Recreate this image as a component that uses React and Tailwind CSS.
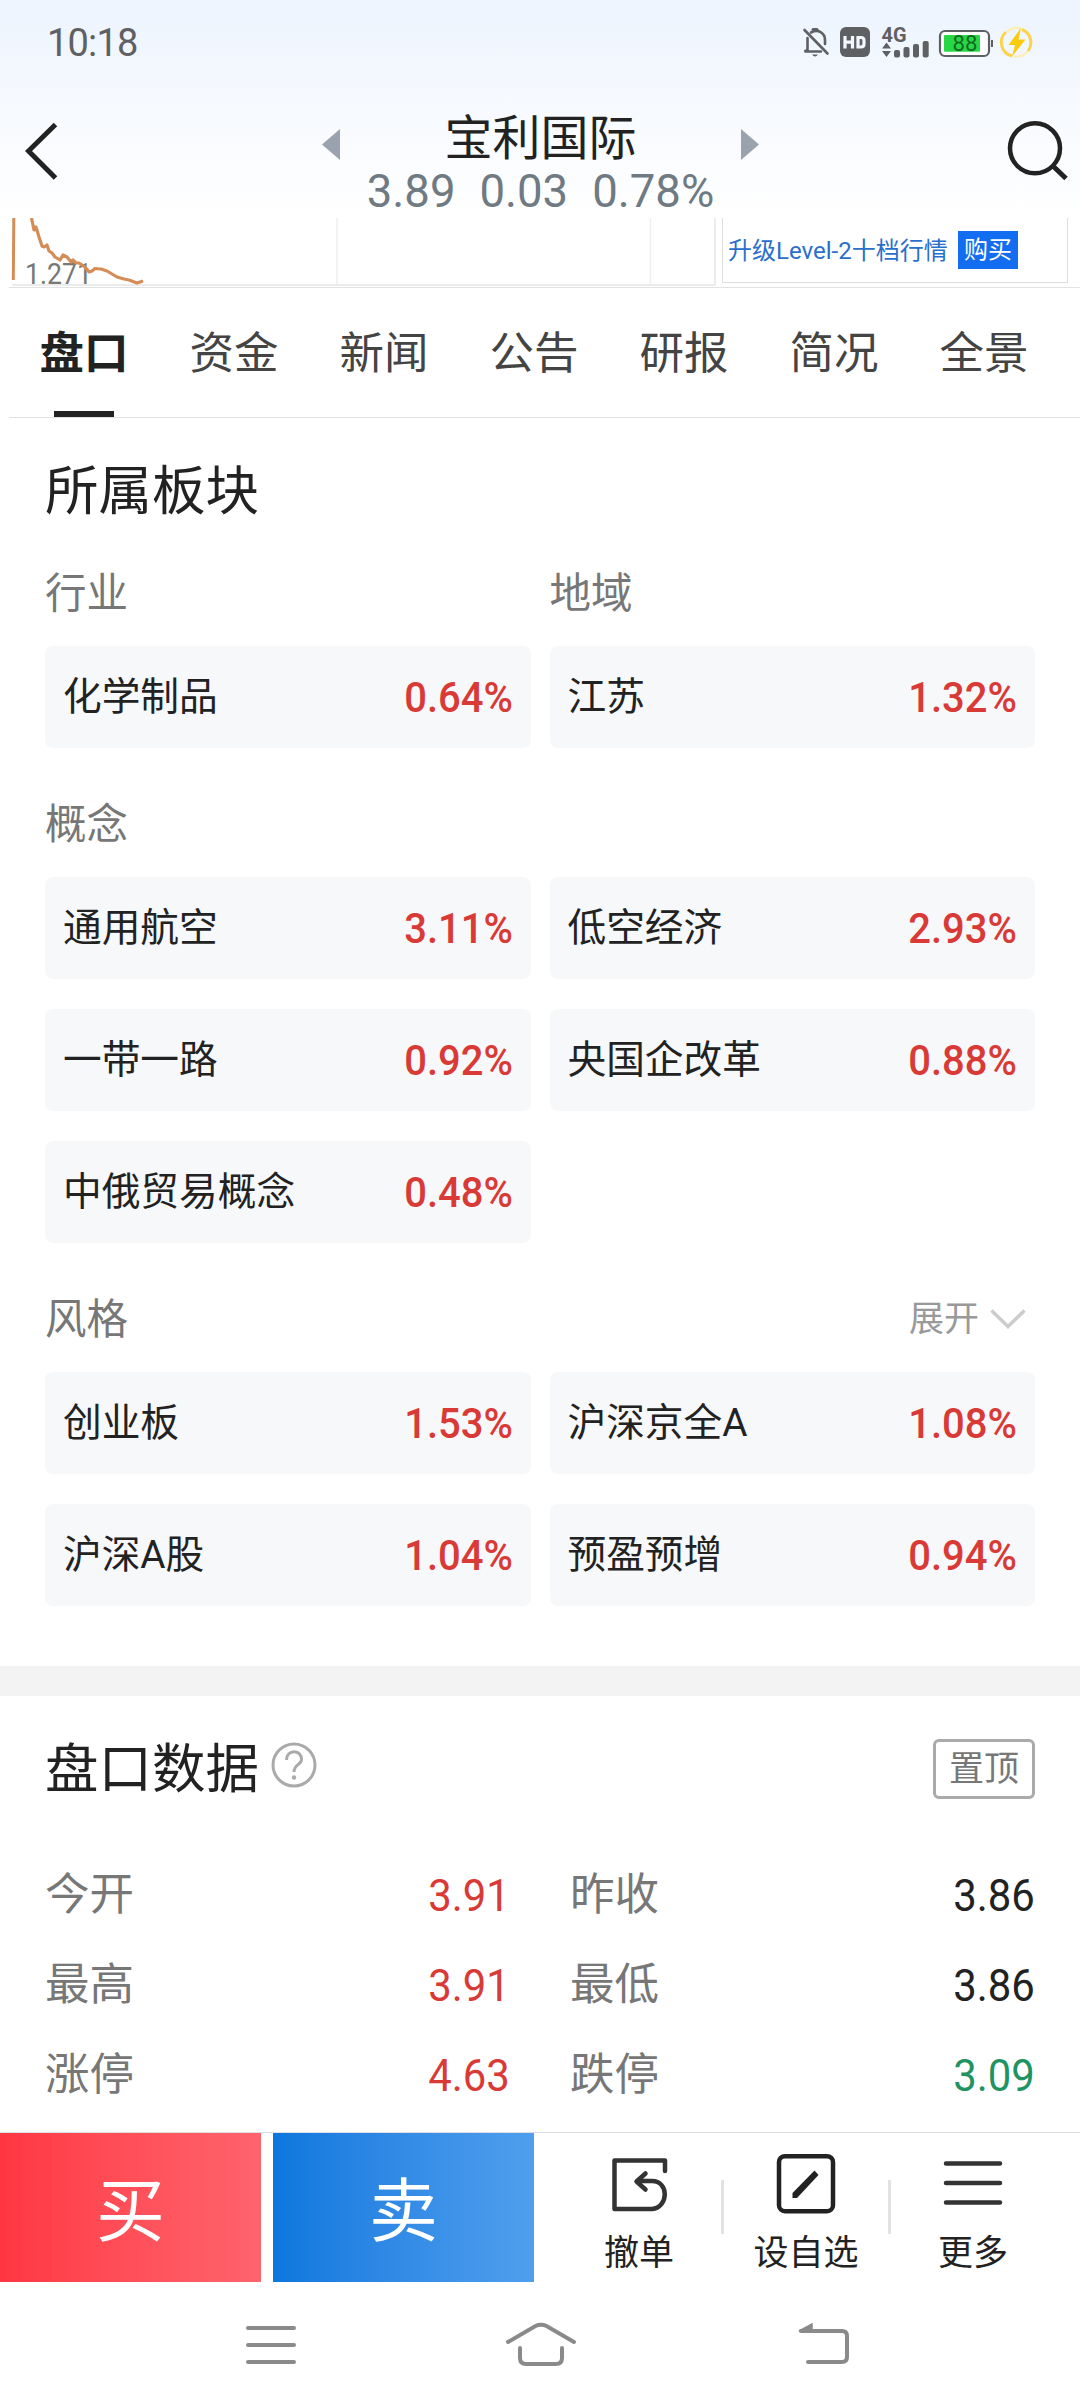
const TABS = ["盘口", "资金", "新闻", "公告", "研报", "简况", "全景"];

const CONCEPTS = [
  { name: "通用航空", change: "3.11%" },
  { name: "低空经济", change: "2.93%" },
  { name: "一带一路", change: "0.92%" },
  { name: "央国企改革", change: "0.88%" },
  { name: "中俄贸易概念", change: "0.48%" },
];

const STYLES = [
  { name: "创业板", change: "1.53%" },
  { name: "沪深京全A", change: "1.08%" },
  { name: "沪深A股", change: "1.04%" },
  { name: "预盈预增", change: "0.94%" },
];

const QUOTES = [
  { label: "今开", value: "3.91", color: "text-[#d93a36]" },
  { label: "昨收", value: "3.86", color: "text-[#222]" },
  { label: "最高", value: "3.91", color: "text-[#d93a36]" },
  { label: "最低", value: "3.86", color: "text-[#222]" },
  { label: "涨停", value: "4.63", color: "text-[#d93a36]" },
  { label: "跌停", value: "3.09", color: "text-[#1f9362]" },
];

function StatusBar() {
  return (
    <div className="flex h-[84px] items-center justify-between pl-[47px] pr-[47px] text-[#5f6064]">
      <span className="pt-[2px] text-[38px] leading-none tracking-[-0.8px]">10:18</span>
      <svg width="232" height="52" viewBox="801 16 232 52" fill="none">
        {/* muted bell */}
        <g stroke="#5f6064" strokeWidth="2.6" strokeLinecap="round">
          <path d="M804.5 30 L827.5 53.5" />
          <path d="M807.5 38 V50 L804.5 51.5 H821" />
          <path d="M811 32.5 C818 28.5 825 33 825 40 V44" />
          <path d="M813 29.5 h4" strokeWidth="3" />
        </g>
        <path d="M812 54.5 h6 q-3 4 -6 0z" fill="#5f6064" />
        {/* HD */}
        <rect x="840" y="27" width="30" height="30" rx="6" fill="#5f6064" />
        <path
          d="M845 36 V48.5 M852.5 36 V48.5 M845 42.2 H852.5 M858 37.5 H861 Q864 37.5 864 40.5 V44 Q864 47 861 47 H858 Z"
          stroke="#f3f7fe"
          strokeWidth="3.2"
        />
        {/* network */}
        <text x="881.5" y="42" fontSize="20" fontWeight="700" fill="#5f6064" textLength="25" lengthAdjust="spacingAndGlyphs">
          4G
        </text>
        <path d="M882 48.5 L886.5 42.5 L891 48.5 Z M882 51 L886.5 57 L891 51 Z" fill="#5f6064" />
        <g fill="#5f6064">
          <rect x="894" y="50" width="6" height="7.5" rx="2" />
          <rect x="903.5" y="47" width="6" height="10.5" rx="2" />
          <rect x="913" y="44" width="6" height="13.5" rx="2" />
          <rect x="922.7" y="41" width="6" height="16.5" rx="2" />
        </g>
        {/* battery */}
        <rect x="940" y="31" width="49" height="25" rx="5" stroke="#5f6064" strokeWidth="2.2" fill="#fff" />
        <rect x="944" y="35" width="36" height="16.8" rx="1" fill="#28d745" />
        <path d="M992 40 v7" stroke="#5f6064" strokeWidth="2" />
        <text x="952.5" y="51" fontSize="22" fill="#106b22" textLength="25" lengthAdjust="spacingAndGlyphs">
          88
        </text>
        {/* fast charge */}
        <path d="M1012 56 A14 14 0 0 1 1006 32 " stroke="#fbd44c" strokeWidth="3" />
        <path d="M1007 32 A14 14 0 0 1 1022 29 " stroke="#fdeeb8" strokeWidth="2.5" />
        <path d="M1022 29.5 A14 14 0 0 1 1028 51" stroke="#fbd44c" strokeWidth="3" />
        <path d="M1028 51 A14 14 0 0 1 1013 56" stroke="#fdeeb8" strokeWidth="2.5" />
        <path d="M1021 28 L1008.5 45 H1015 L1012 56.5 L1025.5 39.5 H1018.5 Z" fill="#fccb0b" />
      </svg>
    </div>
  );
}

function Header() {
  return (
    <header className="flex h-[134px] justify-between pl-[25px] pr-[11px]">
      <svg className="mr-[15px] mt-[38px]" width="34" height="58" viewBox="0 0 34 58" fill="none">
        <path d="M30.5 2.5 L3.5 29 L30.5 56" stroke="#222" strokeWidth="5" />
      </svg>
      <div className="flex flex-col items-center">
        <div className="flex h-[83px] w-[438px] items-center justify-between pt-[27px]">
          <svg className="mt-[10px]" width="18" height="31" viewBox="0 0 18 31">
            <path d="M18 0 V31 L0 15.5 Z" fill="#9aa3ad" />
          </svg>
          <h1 className="text-[48px] leading-[56px] text-[#222]">宝利国际</h1>
          <svg className="mt-[10px]" width="18" height="31" viewBox="0 0 18 31">
            <path d="M0 0 V31 L18 15.5 Z" fill="#9aa3ad" />
          </svg>
        </div>
        <div className="flex gap-[24px] text-[45.5px] leading-[49px] text-[#6f7a83]">
          <span>3.89</span>
          <span>0.03</span>
          <span>0.78%</span>
        </div>
      </div>
      <svg className="mt-[36px]" width="62" height="62" viewBox="0 0 62 62" fill="none" stroke="#222">
        <ellipse cx="28" cy="28.3" rx="25" ry="25" strokeWidth="4.5" />
        <path d="M46 46 L59 58.5" strokeWidth="5" />
      </svg>
    </header>
  );
}

// bottom edge of the scrolled price chart, with the Level-2 banner next to it
function ChartStrip() {
  return (
    <div className="ml-[9px] flex h-[70px] border-b border-[#e2e2e2]">
      <div className="h-[68px] w-[708px]">
        <svg width="708" height="68" viewBox="9 218 708 68" fill="none">
          <path d="M337 218 V285 M650.5 218 V285" stroke="#efefef" strokeWidth="1.5" />
          <path d="M715 218 V285 M12 285 H716" stroke="#ececec" strokeWidth="2" />
          <text x="25" y="284" fontSize="29" fill="#777" textLength="67" lengthAdjust="spacingAndGlyphs">
            1.271
          </text>
          <path d="M13.8 218 L13.3 280" stroke="#d58d58" strokeWidth="3" />
          <path
            d="M31.5 218 L34 230 L36 227 L39 237 L42 246 L44 247 L47 245 L49 251 L52 253 L55 257 L60 260 L63 255 L67 257 L71 262 L73 260 L76 263 L79 263 L85 267 L89 272 L92 271 L95 268.5 L101 269 L107 271 L112 274 L117 277 L124 279 L129 280 L137 283 L143 281"
            stroke="#d58d58"
            strokeWidth="3.2"
            strokeLinejoin="round"
          />
        </svg>
      </div>
      <div className="ml-[5px] flex h-[65px] w-[346px] items-center border-x border-b border-[#dedede] pl-[5px]">
        <span className="w-[225px] whitespace-nowrap pt-[2px] text-[24px] text-[#2a6fcb]">升级Level-2十档行情</span>
        <button className="ml-[5px] flex h-[38px] w-[60px] items-center justify-center bg-[#126df0] text-[24px] leading-none text-white">
          购买
        </button>
      </div>
    </div>
  );
}

function Tabs() {
  return (
    <nav className="ml-[9px] flex h-[130px] border-b border-[#e2e2e2]">
      {TABS.map((tab, i) => (
        <div
          key={tab}
          className={`flex w-[150px] shrink-0 flex-col items-center text-[44.5px] leading-[64px] pt-[34px] ${
            i === 0 ? "font-bold text-[#222]" : "text-[#444]"
          }`}
        >
          {tab}
          {i === 0 && <div className="mt-auto h-[6px] w-[60px] bg-[#222]" />}
        </div>
      ))}
    </nav>
  );
}

function Card({ name, change }) {
  return (
    <div className="flex h-[102px] items-center justify-between rounded-[8px] bg-[#f7f8fa] px-[18px]">
      <span className="pt-[1px] text-[38.7px] text-[#222]">{name}</span>
      <span className="origin-right scale-x-[0.93] text-[43px] font-medium text-[#d93a36]">{change}</span>
    </div>
  );
}

function CardGrid({ items }) {
  return (
    <div className="grid grid-cols-2 gap-x-[19px] gap-y-[30px]">
      {items.map((item) => (
        <Card key={item.name} {...item} />
      ))}
    </div>
  );
}

function Sectors() {
  return (
    <section className="h-[1248px] px-[45px] pt-[38px] text-[#777]">
      <h2 className="text-[53.5px] leading-[72px] text-[#222]">所属板块</h2>
      <div className="mt-[36px] grid grid-cols-2 gap-x-[19px] text-[41.5px] leading-[60px]">
        <span>行业</span>
        <span>地域</span>
      </div>
      <div className="mt-[22px]">
        <CardGrid items={[{ name: "化学制品", change: "0.64%" }, { name: "江苏", change: "1.32%" }]} />
      </div>
      <div className="mt-[47px] text-[41.5px] leading-[60px]">概念</div>
      <div className="mt-[22px]">
        <CardGrid items={CONCEPTS} />
      </div>
      <div className="mt-[47px] flex items-center justify-between pr-[9px] text-[41.5px] leading-[60px]">
        风格
        <div className="flex items-center text-[35px] text-[#999]">
          展开
          <svg className="mb-[2px] ml-[11px]" width="36" height="20" viewBox="0 0 36 20" fill="none">
            <path d="M1.5 1.5 L18 17.5 L34.5 1.5" stroke="#ccc" strokeWidth="3.5" />
          </svg>
        </div>
      </div>
      <div className="mt-[22px]">
        <CardGrid items={STYLES} />
      </div>
    </section>
  );
}

function QuoteData() {
  return (
    <section className="h-[436px] overflow-hidden px-[45px] pt-[36px]">
      <div className="flex items-center">
        <h2 className="pt-[2px] text-[53.5px] leading-[72px] text-[#222]">盘口数据</h2>
        <svg className="mb-[8px] ml-[12px]" width="46" height="46" viewBox="0 0 46 46" fill="none" stroke="#aaa">
          <circle cx="23" cy="23" r="21" strokeWidth="3" />
          <path d="M15.5 18 C15.5 7 30.5 7 30.5 17.5 C30.5 23 23 22 23 30" strokeWidth="3" />
          <circle cx="23" cy="35.5" r="1.200" strokeWidth="2" />
        </svg>
        <button className="ml-auto flex h-[60px] w-[102px] items-center justify-center rounded-[6px] border-3 border-[#aaa] text-[35px] leading-none text-[#777]">
          置顶
        </button>
      </div>
      <div className="mt-[44px] grid grid-cols-[465px_465px] gap-x-[60px]">
        {QUOTES.map((q) => (
          <div key={q.label} className="flex h-[90px] items-center justify-between">
            <span className="pt-[1px] text-[44.5px] text-[#777]">{q.label}</span>
            <span className={`origin-right scale-x-[0.93] pt-[1px] text-[45px] ${q.color}`}>{q.value}</span>
          </div>
        ))}
      </div>
    </section>
  );
}

function Action({ label, children }) {
  return (
    <div className="flex w-[164px] flex-col items-center pt-[19px] text-[35px] leading-[52px] text-[#222]">
      <svg width="64" height="64" viewBox="0 0 64 64" fill="none" stroke="#333" strokeWidth="4.500">
        {children}
      </svg>
      <span className="mt-[12px] whitespace-nowrap">{label}</span>
    </div>
  );
}

function BottomBar() {
  return (
    <div className="flex h-[150px] border-t border-[#dedfe3]">
      <button className="flex w-[261px] items-center justify-center bg-linear-to-r from-[#ff3642] to-[#ff636e] pt-[9px] text-[69px] leading-none text-white">
        买
      </button>
      <button className="ml-[12px] flex w-[261px] items-center justify-center bg-linear-to-r from-[#0a77dd] to-[#4f9fee] pt-[9px] text-[69px] leading-none text-white">
        卖
      </button>
      <div className="ml-[23px] flex">
        <Action label="撤单">
          <path
            d="M58 19 V8.5 H7.5 V57 H45 C62 55 62 29 45 29 H30 M38.5 21.5 L29.5 29.5 L38.5 37.5"
            strokeLinecap="round"
            strokeLinejoin="round"
          />
        </Action>
        <div className="mt-[47px] h-[54px] w-[3px] bg-[#e2e2e2]" />
        <Action label="设自选">
          <rect x="5" y="4.2" width="54" height="55" rx="6" stroke="#222" />
          <path d="M18.5 46 V41 L40.5 18.5 L44.5 23 L23 46 Z" fill="#222" stroke="none" />
        </Action>
        <div className="mt-[47px] h-[54px] w-[3px] bg-[#e2e2e2]" />
        <Action label="更多">
          <path d="M5 11.5 H59 M5 31 H59 M5 50.5 H59" strokeLinecap="round" />
        </Action>
      </div>
    </div>
  );
}

function SystemNav() {
  return (
    <div className="flex h-[126px] items-start pl-[244px] pt-[40px]">
      <svg width="54" height="46" viewBox="244 2322 54 46" stroke="#8a8a8a" strokeWidth="4" strokeLinecap="round">
        <path d="M248 2328 H294 M248 2345 H294 M248 2362 H294" />
      </svg>
      <svg className="ml-[206px]" width="74" height="46" viewBox="504 2322 74 46" fill="none" stroke="#8a8a8a" strokeWidth="4" strokeLinecap="round">
        <path d="M508 2342 L535.5 2326 Q541 2323.5 546.5 2326 L574 2342" />
        <path d="M520 2348 V2358 Q520 2364 526 2364 H556 Q562 2364 562 2358 V2348" />
      </svg>
      <svg className="ml-[218px]" width="55" height="46" viewBox="796 2322 55 46" fill="none" stroke="#8a8a8a" strokeWidth="4" strokeLinecap="round">
        <path d="M801 2331 H842 Q847 2331 847 2336 V2357 Q847 2362 842 2362 H808" />
        <path d="M799 2331 L812 2324 V2331 Z" fill="#8a8a8a" strokeWidth="1.5" />
      </svg>
    </div>
  );
}

export default function App() {
  return (
    <div className="h-[2408px] w-[1080px] overflow-hidden bg-white font-[Roboto,'Noto_Sans_CJK_SC',sans-serif]">
      <div className="bg-linear-to-b from-[#ecf4fe] via-[#f6f9fe] via-45% to-white">
        <StatusBar />
        <Header />
      </div>
      <ChartStrip />
      <Tabs />
      <Sectors />
      <div className="h-[30px] bg-[#f3f3f3]" />
      <QuoteData />
      <BottomBar />
      <SystemNav />
    </div>
  );
}
